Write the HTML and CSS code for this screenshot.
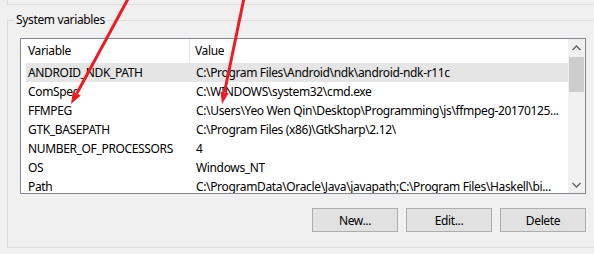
FILE: index.html
```html
<!DOCTYPE html>
<html>
<head>
    <title>Environment Variables</title>
    <link rel="stylesheet" href="styles.css">
</head>
<body>
    <div class="prev-group"></div>

    <div class="group">
        <div class="legend">System variables</div>

        <div class="listview">
            <div class="table">
                <div class="row header">
                    <div class="cell name">Variable</div>
                    <div class="cell value">Value</div>
                </div>
                <div class="row selected">
                    <div class="cell name">ANDROID_NDK_PATH</div>
                    <div class="cell value">C:\Program Files\Android\ndk\android-ndk-r11c</div>
                </div>
                <div class="row">
                    <div class="cell name">ComSpec</div>
                    <div class="cell value">C:\WINDOWS\system32\cmd.exe</div>
                </div>
                <div class="row">
                    <div class="cell name">FFMPEG</div>
                    <div class="cell value">C:\Users\Yeo Wen Qin\Desktop\Programming\js\ffmpeg-20170125...</div>
                </div>
                <div class="row">
                    <div class="cell name">GTK_BASEPATH</div>
                    <div class="cell value">C:\Program Files (x86)\GtkSharp\2.12\</div>
                </div>
                <div class="row">
                    <div class="cell name">NUMBER_OF_PROCESSORS</div>
                    <div class="cell value">4</div>
                </div>
                <div class="row">
                    <div class="cell name">OS</div>
                    <div class="cell value">Windows_NT</div>
                </div>
                <div class="row">
                    <div class="cell name">Path</div>
                    <div class="cell value">C:\ProgramData\Oracle\Java\javapath;C:\Program Files\Haskell\bi...</div>
                </div>
            </div>
            <div class="scrollbar">
                <div class="arrow">
                    <svg width="9" height="6" viewBox="0 0 9 6"><path d="M0.5 5 L4.5 1 L8.5 5" fill="none" stroke="#606060" stroke-width="1.3"/></svg>
                </div>
                <div class="track">
                    <div class="thumb"></div>
                </div>
                <div class="arrow">
                    <svg width="9" height="6" viewBox="0 0 9 6"><path d="M0.5 1 L4.5 5 L8.5 1" fill="none" stroke="#606060" stroke-width="1.3"/></svg>
                </div>
            </div>
        </div>

        <div class="buttons">
            <button>New...</button>
            <button>Edit...</button>
            <button>Delete</button>
        </div>
    </div>

    <!-- red annotation arrows drawn over the dialog -->
    <svg class="annotations" width="594" height="254" viewBox="0 0 594 254">
        <line x1="128.5" y1="-2" x2="76.8" y2="93.5" stroke="#ec1c24" stroke-width="3"/>
        <polygon points="71,104 80.8,95.6 72.8,91.4" fill="#ec1c24"/>
        <line x1="244" y1="-2" x2="224.5" y2="92.3" stroke="#ec1c24" stroke-width="3"/>
        <polygon points="222,104 228.6,93.2 220.4,91.4" fill="#ec1c24"/>
    </svg>
</body>
</html>
```

FILE: styles.css
```css
html,
body {
    margin: 0;
    height: 100%;
    overflow: hidden;
}

body {
    font-family: "Noto Sans", "Open Sans", sans-serif;
    font-size: 12px;
    letter-spacing: -0.35px;
    color: #000;
    background-color: #f0f0f0;
    position: relative;
}

.prev-group {
    margin-left: 7px;
    height: 4px;
    border-left: 1px solid #dcdcdc;
    border-bottom: 1px solid #dcdcdc;
}

.group {
    margin: 15px 0 0 7px;
    height: 226px;
    border: 1px solid #dcdcdc;
    border-right: none;
    padding-left: 12px;
}

.legend {
    width: fit-content;
    margin: -9px 0 0 -6px;
    padding: 0 2px;
    height: 16px;
    line-height: 16px;
    background-color: #f0f0f0;
}

.listview {
    display: flex;
    margin-top: 10px;
    width: 564px;
    height: 154px;
    border: 1px solid #828790;
    background-color: #fff;
    overflow: hidden;
}

.table {
    flex: 1;
    overflow: hidden;
}

.row {
    display: flex;
    height: 19px;
    line-height: 19px;
    margin-left: 5px;
    white-space: nowrap;
}

.row.header {
    height: 24px;
    line-height: 24px;
    margin-left: 0;
    padding-left: 5px;
}

.row.selected {
    background-color: #e5e5e5;
}

.cell {
    overflow: hidden;
    padding-left: 2px;
}

.cell.name {
    width: 164px;
    flex: none;
}

.header .cell.name {
    width: 158px;
    border-right: 1px solid #e5e5e5;
    padding-right: 3px;
}

.cell.value {
    padding-left: 4px;
}

.header .cell.value {
    padding-left: 5px;
}

.scrollbar {
    width: 17px;
    display: flex;
    flex-direction: column;
    background-color: #f0f0f0;
}

.arrow {
    height: 17px;
    display: flex;
    align-items: center;
    justify-content: center;
}

.track {
    flex: 1;
    padding: 1px 1px 0 1px;
}

.thumb {
    height: 35px;
    background-color: #cdcdcd;
}

.buttons {
    display: flex;
    justify-content: flex-end;
    gap: 8px;
    width: 566px;
    margin-top: 14px;
}

.buttons button {
    width: 86px;
    height: 24px;
    padding: 0;
    font-family: inherit;
    font-size: 12px;
    letter-spacing: -0.35px;
    color: #000;
    background-color: #e1e1e1;
    border: 1px solid #adadad;
}

.annotations {
    position: absolute;
    top: 0;
    left: 0;
}
```
